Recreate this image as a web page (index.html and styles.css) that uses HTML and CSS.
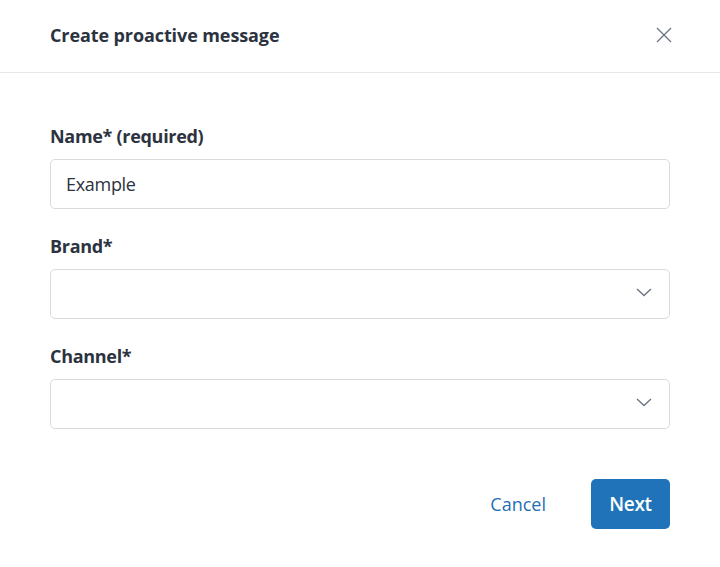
FILE: index.html
```html
<!DOCTYPE html>
<html>
<head>
<meta charset="utf-8">
<link rel="stylesheet" href="styles.css">
</head>
<body>
<div class="modal">
  <div class="header">
    <h1 class="title">Create proactive message</h1>
    <button class="close" aria-label="Close">
      <svg width="16" height="16" viewBox="0 0 16 16"><path d="M1 1 L15 15 M15 1 L1 15" stroke="#6b7380" stroke-width="1.3" fill="none"/></svg>
    </button>
  </div>
  <div class="body">
    <div class="field">
      <label class="label">Name* (required)</label>
      <div class="input"><span class="value">Example</span></div>
    </div>
    <div class="field">
      <label class="label">Brand*</label>
      <div class="input select"><span class="value faint">&nbsp;</span>
        <svg class="chev" width="16" height="9" viewBox="0 0 16 9"><path d="M1 1 L8 7.5 L15 1" stroke="#6b7380" stroke-width="1.3" fill="none"/></svg>
      </div>
    </div>
    <div class="field">
      <label class="label">Channel*</label>
      <div class="input select"><span class="value">&nbsp;</span>
        <svg class="chev" width="16" height="9" viewBox="0 0 16 9"><path d="M1 1 L8 7.5 L15 1" stroke="#6b7380" stroke-width="1.3" fill="none"/></svg>
      </div>
    </div>
  </div>
  <div class="footer">
    <button class="cancel">Cancel</button>
    <button class="next">Next</button>
  </div>
</div>
</body>
</html>
```
FILE: styles.css
```css
html, body {
  margin: 0;
  padding: 0;
  background: #ffffff;
}
body {
  font-family: "Open Sans", "Noto Sans", sans-serif;
  color: #2c3340;
}
.modal {
  width: 720px;
  height: 567px;
  box-sizing: border-box;
  display: flex;
  flex-direction: column;
}
.header {
  height: 73px;
  box-sizing: border-box;
  border-bottom: 1px solid #e6e8eb;
  display: flex;
  align-items: center;
  justify-content: space-between;
  padding: 0 48px 2px 50px;
}
.title {
  margin: 0;
  font-size: 18px;
  font-weight: 700;
  letter-spacing: -0.1px;
  color: #2c3340;
}
.close {
  border: none;
  background: none;
  padding: 0;
  width: 16px;
  height: 16px;
  display: flex;
}
.body {
  padding: 50px 50px 0 50px;
  display: flex;
  flex-direction: column;
  gap: 24px;
}
.field {
  display: flex;
  flex-direction: column;
  gap: 10px;
}
.label {
  font-size: 18px;
  font-weight: 700;
  line-height: 26px;
  letter-spacing: -0.3px;
  color: #2c3340;
}
.input {
  height: 50px;
  box-sizing: border-box;
  border: 1px solid #d9dcdf;
  border-radius: 5px;
  display: flex;
  align-items: center;
  justify-content: space-between;
  padding: 0 17px 0 15px;
}
.chev {
  margin-bottom: 4px;
}
.value {
  font-size: 18px;
  color: #2c3340;
  letter-spacing: -0.3px;
}
.footer {
  display: flex;
  justify-content: flex-end;
  align-items: center;
  padding: 50px 50px 0 0;
  gap: 45px;
}
.cancel {
  border: none;
  background: none;
  font-family: inherit;
  font-size: 18px;
  color: #1f6fb4;
  padding: 0;
  letter-spacing: 0;
}
.next {
  width: 79px;
  height: 50px;
  border: none;
  border-radius: 5px;
  background: #2073b9;
  color: #ffffff;
  font-family: inherit;
  font-size: 19px;
  font-weight: 600;
  letter-spacing: -0.3px;
  padding: 0;
}
```
